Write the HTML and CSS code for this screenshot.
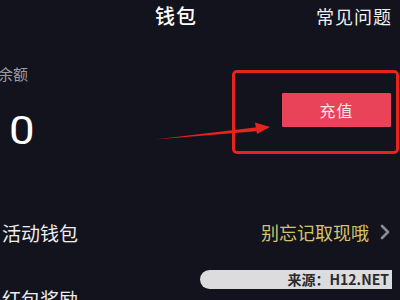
FILE: index.html
```html
<!DOCTYPE html>
<html lang="zh">
<head>
<meta charset="utf-8">
<link rel="stylesheet" href="styles.css">
</head>
<body>
<div class="screen">
  <header class="header">
    <span class="title">钱包</span>
    <span class="faq">常见问题</span>
  </header>
  <section class="balance">
    <div class="balance-info">
      <div class="balance-label">余额</div>
      <div class="balance-num">0</div>
    </div>
    <button class="recharge">充值</button>
  </section>
  <ul class="list">
    <li class="row">
      <span class="row-name">活动钱包</span>
      <span class="row-extra">别忘记取现哦
        <svg class="chev" width="10" height="16" viewBox="0 0 10 16"><polyline points="2,2 8,8 2,14" fill="none" stroke="#8b8b93" stroke-width="2.6" stroke-linecap="round" stroke-linejoin="round"/></svg>
      </span>
    </li>
    <li class="row">
      <span class="row-name">红包奖励</span>
    </li>
  </ul>
  <div class="mark-box"></div>
  <svg class="mark-arrow" width="400" height="300" viewBox="0 0 400 300">
    <polygon points="155,139.5 259,127 259.5,131" fill="#e5251d"/>
    <polygon points="255,122.5 270,127 257,134" fill="#e5251d"/>
  </svg>
  <div class="watermark">来源：H12.NET</div>
</div>
</body>
</html>
```
FILE: styles.css
```css
* { box-sizing: border-box; }
html, body {
  margin: 0;
  padding: 0;
  background: #13131d;
}
.screen {
  position: relative;
  width: 400px;
  height: 300px;
  overflow: hidden;
  background: #13131d;
  font-family: "Noto Sans CJK SC", "Noto Sans", sans-serif;
  color: #ffffff;
}
.header {
  height: 32px;
  display: flex;
  align-items: center;
  justify-content: space-between;
  padding: 0 8px 0 155px;
  line-height: 30px;
}
.title {
  font-size: 20px;
  letter-spacing: 1px;
  font-weight: 500;
}
.faq {
  font-size: 18px;
  letter-spacing: 1px;
  color: #f0f0f2;
}
.balance {
  margin-top: 32px;
  display: flex;
  justify-content: space-between;
  align-items: flex-start;
  padding-right: 9px;
  height: 90px;
}
.balance-info {
  display: flex;
  flex-direction: column;
}
.balance-label {
  margin-left: -2px;
  font-size: 15px;
  line-height: 20px;
  color: #9a9aa2;
}
.balance-num {
  margin-top: 25px;
  margin-left: 9px;
  font-family: "Roboto", "Liberation Sans", sans-serif;
  font-size: 38px;
  line-height: 44px;
  transform: scaleX(1.2);
  transform-origin: left center;
}
.recharge {
  margin-top: 29px;
  width: 109px;
  height: 34px;
  border: none;
  border-radius: 1px;
  background: #e9435a;
  color: #f6e6ea;
  font-family: "Noto Sans CJK SC", sans-serif;
  font-size: 16px;
  letter-spacing: 1px;
  padding: 0;
}
.list {
  list-style: none;
  margin: 45px 0 0;
  padding: 0;
}
.row {
  height: 66px;
  display: flex;
  align-items: center;
  justify-content: space-between;
  padding: 0 10px 0 2px;
}
.row-name {
  font-size: 19px;
  color: #eeeeF2;
}
.row-extra {
  display: flex;
  align-items: center;
  gap: 11px;
  font-size: 18px;
  color: #d5c36c;
}
.chev { display: block; }
.mark-box {
  position: absolute;
  left: 232px;
  top: 70px;
  width: 167px;
  height: 84px;
  border: 3px solid #e5251d;
  border-radius: 5px;
}
.mark-arrow {
  position: absolute;
  left: 0;
  top: 0;
}
.watermark {
  position: absolute;
  left: 200px;
  top: 270px;
  width: 192px;
  height: 19px;
  background: #dcdcdf;
  border-radius: 10px 0 0 10px;
  color: #2a2a2e;
  font-family: "Noto Sans CJK SC", "Liberation Sans", sans-serif;
  font-size: 14px;
  font-weight: 700;
  line-height: 19px;
  text-align: right;
  padding-right: 3px;
}
```
